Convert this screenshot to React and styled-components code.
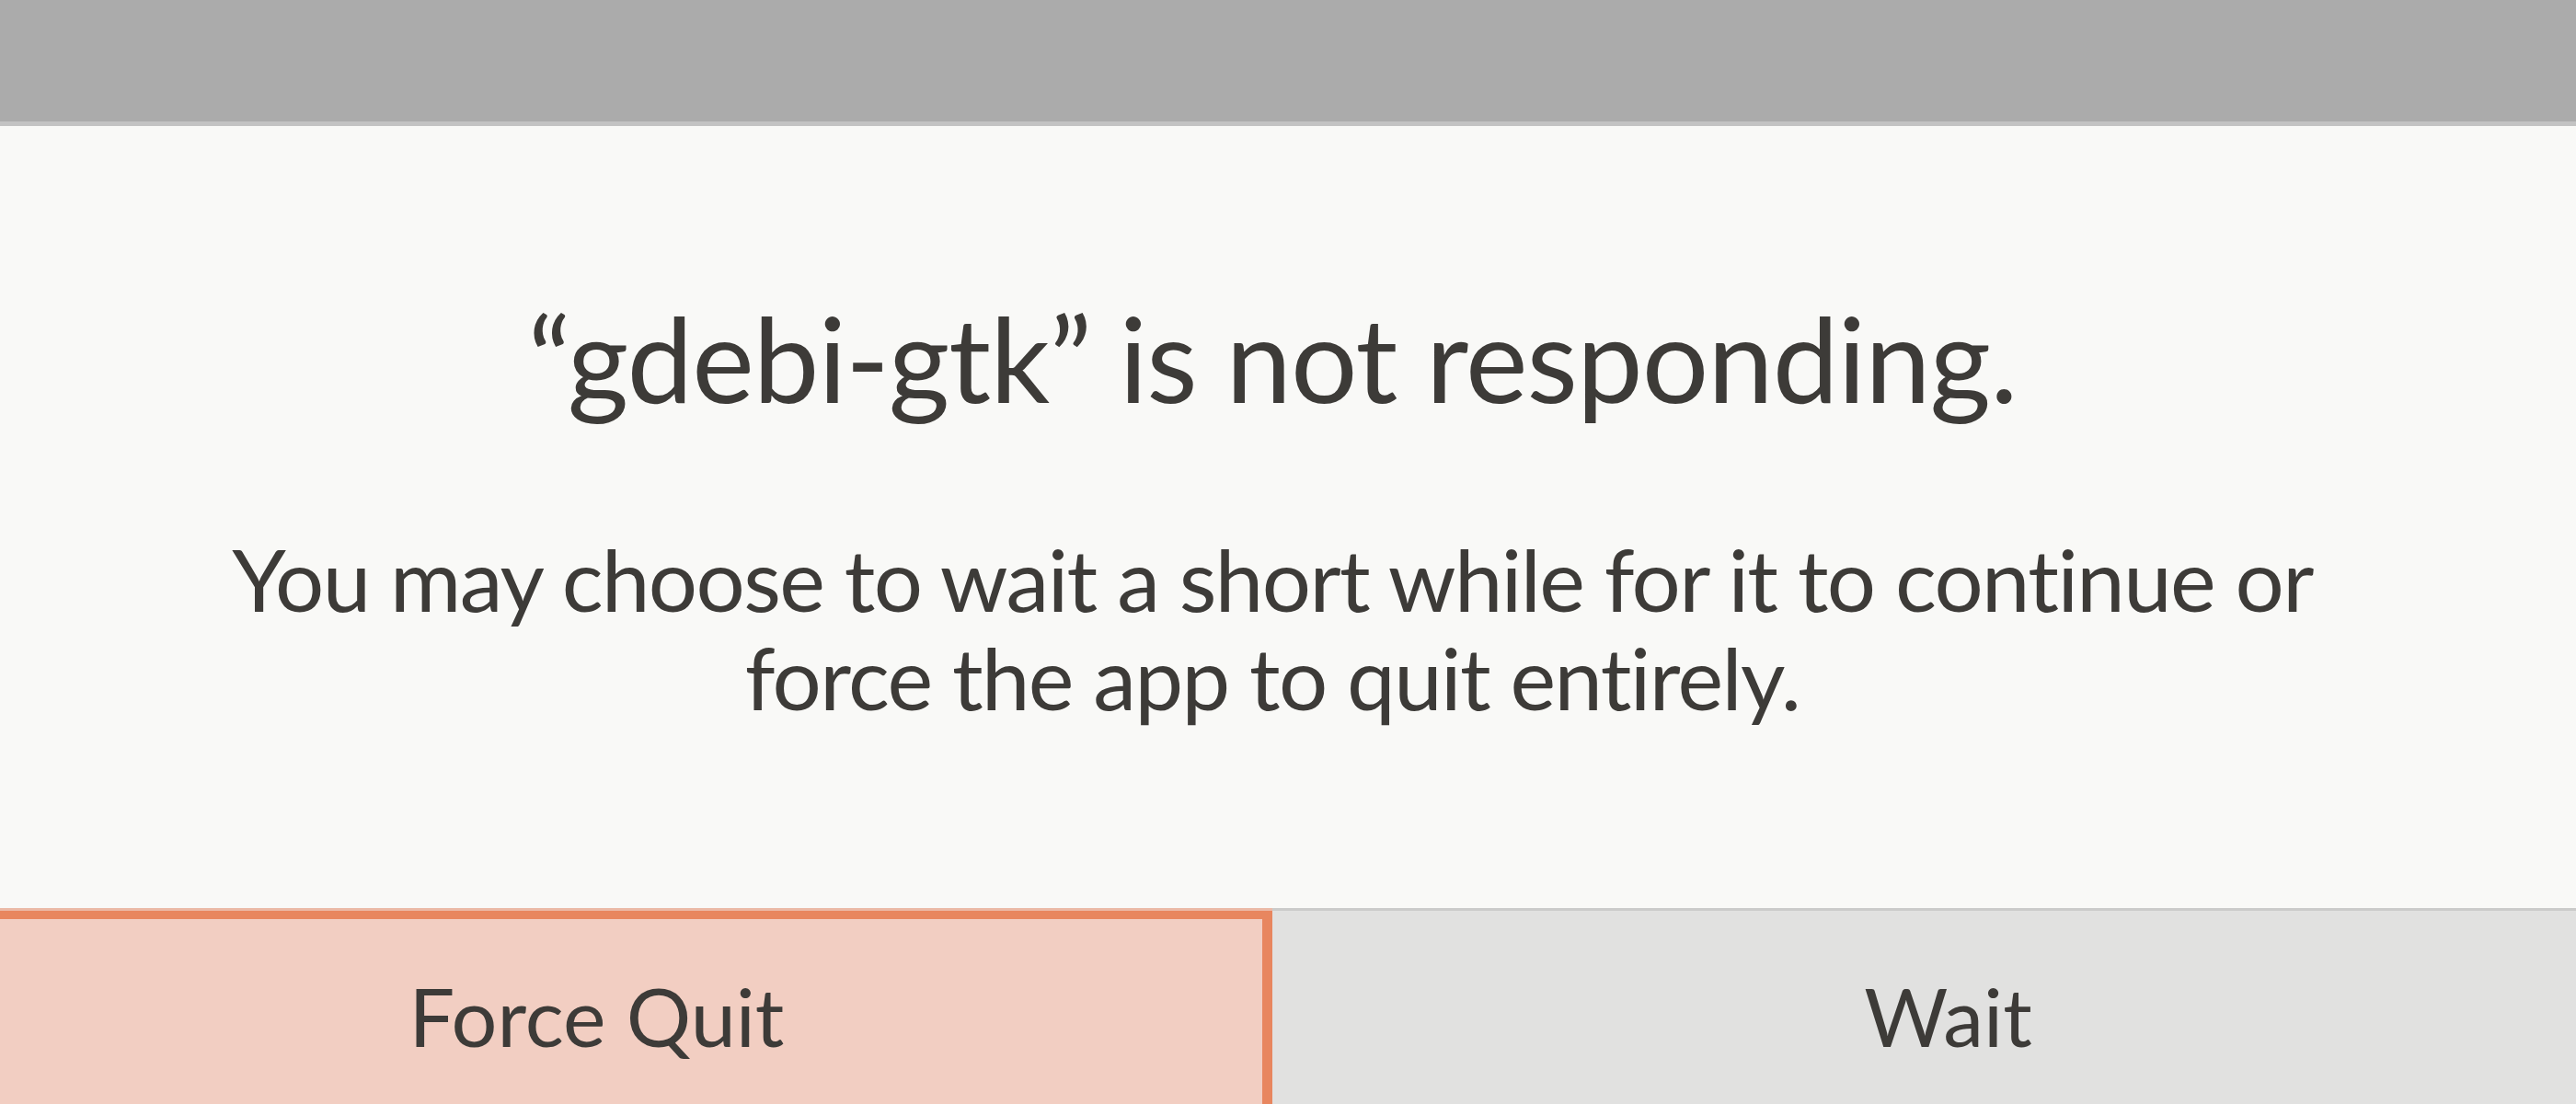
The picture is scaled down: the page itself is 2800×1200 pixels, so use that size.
import React from "react";
import styled, { createGlobalStyle } from "styled-components";

const GlobalStyle = createGlobalStyle`
  html,
  body {
    margin: 0;
    padding: 0;
    overflow: hidden;
    background-color: #f9f9f7;
    font-family: Lato, "Open Sans", "Liberation Sans", sans-serif;
    color: #3d3b38;
  }
`;

const Screen = styled.div`
  display: flex;
  flex-direction: column;
  width: 2800px;
  height: 1200px;
  overflow: hidden;
`;

// dimmed parent window behind the dialog
const Backdrop = styled.div`
  flex: none;
  height: 132px;
  background-color: #ababab;
  border-bottom: 5px solid #c3c3c3;
`;

const Dialog = styled.div`
  display: flex;
  flex-direction: column;
  width: 2938px;
  margin-left: -86px;
  background-color: #f9f9f7;
`;

const Message = styled.div`
  display: flex;
  flex-direction: column;
  align-items: center;
  height: 850px;
  padding-top: 188px;
  box-sizing: border-box;
  text-align: center;
`;

const Title = styled.h1`
  margin: 0;
  font-size: 128px;
  line-height: 128px;
  font-weight: 400;
  letter-spacing: -1px;
  white-space: nowrap;
`;

const Body = styled.p`
  margin: 122px 0 0;
  font-size: 94px;
  line-height: 107px;
  font-weight: 400;
  letter-spacing: -1.6px;
  white-space: nowrap;
`;

const ButtonRow = styled.div`
  display: grid;
  grid-template-columns: 1fr 1fr;
`;

const Button = styled.button`
  display: flex;
  align-items: center;
  justify-content: center;
  height: 230px;
  margin: 0;
  padding: 0;
  font-family: inherit;
  font-size: 88px;
  line-height: 88px;
  color: #3d3b38;
  cursor: pointer;
  background-color: ${(p) => (p.$focused ? "#f2cec2" : "#e1e1e0")};
  border: none;
  border-top: 3px solid ${(p) => (p.$focused ? "#ebbaa7" : "#cbcbca")};
  ${(p) =>
    p.$focused &&
    `
    box-shadow: inset 0 9px 0 #e8865f, inset -11px 0 0 #e8865f, inset 10px 0 0 #e8865f;
  `}
`;

export default function App() {
  return (
    <>
      <GlobalStyle />
      <Screen>
        <Backdrop />
        <Dialog>
          <Message>
            <Title>“gdebi-gtk” is not responding.</Title>
            <Body>
              You may choose to wait a short while for it to continue or
              <br />
              force the app to quit entirely.
            </Body>
          </Message>
          <ButtonRow>
            <Button $focused>Force Quit</Button>
            <Button>Wait</Button>
          </ButtonRow>
        </Dialog>
      </Screen>
    </>
  );
}
